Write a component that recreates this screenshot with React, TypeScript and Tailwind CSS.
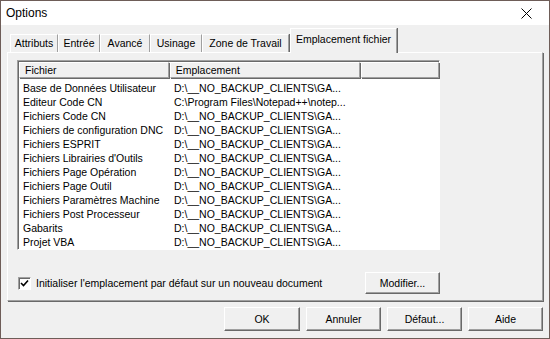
import React from 'react';

const tabs: [string, string][] = [
  ['Attributs', 'w-[48px]'],
  ['Entrée', 'w-[42px]'],
  ['Avancé', 'w-[50px]'],
  ['Usinage', 'w-[52px]'],
  ['Zone de Travail', 'w-[87px]'],
];

const rows: [string, string][] = [
  ['Base de Données Utilisateur', 'D:\\__NO_BACKUP_CLIENTS\\GA...'],
  ['Editeur Code CN', 'C:\\Program Files\\Notepad++\\notep...'],
  ['Fichiers Code CN', 'D:\\__NO_BACKUP_CLIENTS\\GA...'],
  ['Fichiers de configuration DNC', 'D:\\__NO_BACKUP_CLIENTS\\GA...'],
  ['Fichiers ESPRIT', 'D:\\__NO_BACKUP_CLIENTS\\GA...'],
  ["Fichiers Librairies d'Outils", 'D:\\__NO_BACKUP_CLIENTS\\GA...'],
  ['Fichiers Page Opération', 'D:\\__NO_BACKUP_CLIENTS\\GA...'],
  ['Fichiers Page Outil', 'D:\\__NO_BACKUP_CLIENTS\\GA...'],
  ['Fichiers Paramètres Machine', 'D:\\__NO_BACKUP_CLIENTS\\GA...'],
  ['Fichiers Post Processeur', 'D:\\__NO_BACKUP_CLIENTS\\GA...'],
  ['Gabarits', 'D:\\__NO_BACKUP_CLIENTS\\GA...'],
  ['Projet VBA', 'D:\\__NO_BACKUP_CLIENTS\\GA...'],
];

function Button({ label, className = '' }: { label: string; className?: string }) {
  return (
    <div
      className={`shrink-0 flex items-center justify-center bg-[#f0f0f0] border border-t-white border-l-white border-r-[#696969] border-b-[#696969] shadow-[inset_-1px_-1px_0_#a0a0a0] ${className}`}
    >
      {label}
    </div>
  );
}

export default function App() {
  return (
    <div
      className="w-[550px] h-[339px] border border-[#6e5d58] bg-[#f0f0f0] flex flex-col text-[10.5px] text-black leading-none"
      style={{ fontFamily: '"Liberation Sans", Arial, sans-serif' }}
    >
      {/* title bar */}
      <div className="h-[24px] bg-white flex items-center justify-between pl-[5px] pr-[17px] shrink-0">
        <span className="text-[12px]">Options</span>
        <svg width="11" height="11" viewBox="0 0 11 11" className="mt-[1px]">
          <path d="M0.5 0.5 L10.5 10.5 M10.5 0.5 L0.5 10.5" stroke="#000" strokeWidth="1" />
        </svg>
      </div>

      <div className="flex flex-col pl-[6px] pt-[3px]">
        {/* tab strip */}
        <div className="flex items-end h-[24px] pl-[3px]">
          {tabs.map(([t, w]) => (
            <div
              key={t}
              className={`${w} h-[18px] flex items-center justify-center border-l border-t border-l-white border-t-white border-r border-r-[#a0a0a0] shadow-[1px_0_0_#696969]`}
            >
              {t}
            </div>
          ))}
          <div className="w-[107px] h-[25px] ml-[1px] -mb-[1px] pb-[3px] flex items-center justify-center bg-[#f0f0f0] border-l border-t border-l-white border-t-white border-r border-r-[#a0a0a0] shadow-[1px_0_0_#696969] relative z-10">
            Emplacement fichier
          </div>
        </div>

        {/* tab panel */}
        <div className="w-[536px] h-[249px] border border-t-white border-l-white border-r-[#a0a0a0] border-b-[#a0a0a0] shadow-[1px_1px_0_#696969] flex flex-col pl-[9px] pt-[7px]">
          {/* list */}
          <div className="w-[423px] h-[190px] bg-white border border-t-[#a0a0a0] border-l-[#a0a0a0] border-r-white border-b-white shadow-[inset_1px_1px_0_#696969] pl-[1px] pt-[1px] flex flex-col">
            <div className="flex h-[17px] bg-[#f0f0f0]">
              <div className="w-[150px] flex items-center pl-[5px] border border-t-white border-l-white border-r-[#a0a0a0] border-b-[#a0a0a0] shadow-[1px_1px_0_#696969]">
                Fichier
              </div>
              <div className="w-[191px] ml-[1px] flex items-center pl-[5px] border border-t-white border-l-white border-r-[#a0a0a0] border-b-[#a0a0a0] shadow-[1px_1px_0_#696969]">
                Emplacement
              </div>
              <div className="w-[78px] ml-[1px] border border-t-white border-l-white border-r-[#a0a0a0] border-b-[#a0a0a0] shadow-[1px_1px_0_#696969]" />
            </div>
            <div className="flex flex-col pt-[3px]">
              {rows.map(([a, b]) => (
                <div key={a} className="flex h-[14px] items-center">
                  <div className="w-[150px] pl-[4px] whitespace-nowrap">{a}</div>
                  <div className="pl-[5px] whitespace-nowrap">{b}</div>
                </div>
              ))}
            </div>
          </div>

          {/* checkbox row */}
          <div className="flex items-center mt-[22px] h-[22px]">
            <div className="shrink-0 w-[13px] h-[13px] ml-[1px] bg-white border border-t-[#a0a0a0] border-l-[#a0a0a0] border-r-white border-b-white shadow-[inset_1px_1px_0_#696969] flex items-center justify-center">
              <svg width="9" height="9" viewBox="0 0 9 9">
                <path d="M1 4 L3.5 6.5 L8 1.5" stroke="#000" strokeWidth="1.6" fill="none" />
              </svg>
            </div>
            <span className="ml-[5px] whitespace-nowrap">
              Initialiser l'emplacement par défaut sur un nouveau document
            </span>
            <div className="flex-1" />
            <Button label="Modifier..." className="w-[75px] h-[22px] mr-[102px]" />
          </div>
        </div>

        {/* bottom buttons */}
        <div className="flex justify-end gap-[6px] pr-[6px] mt-[6px]">
          <Button label="OK" className="w-[76px] h-[24px]" />
          <Button label="Annuler" className="w-[75px] h-[24px]" />
          <Button label="Défaut..." className="w-[75px] h-[24px]" />
          <Button label="Aide" className="w-[75px] h-[24px]" />
        </div>
      </div>
    </div>
  );
}
